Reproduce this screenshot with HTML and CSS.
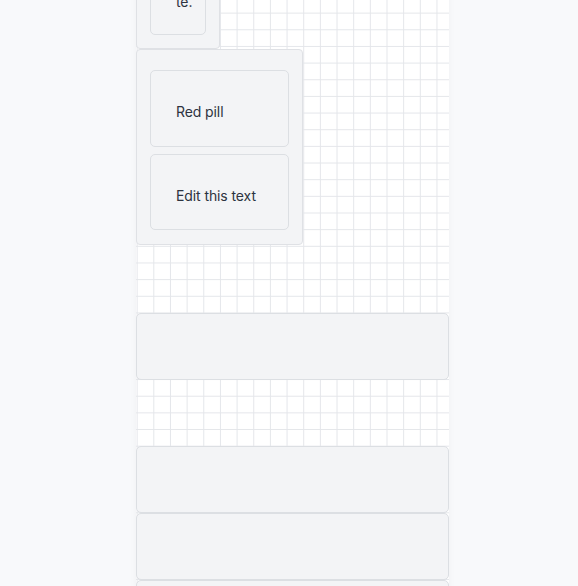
FILE: index.html
```html
<!DOCTYPE html>
<html>
<head>
<meta charset="utf-8">
<link rel="stylesheet" href="styles.css">
</head>
<body>
<div class="page">
  <div class="column">
    <div class="card card-small">
      <div class="item item-small"><span class="txt">te.</span></div>
    </div>
    <div class="card card-wide">
      <div class="item"><span class="txt">Red pill</span></div>
      <div class="item"><span class="txt">Edit this text</span></div>
    </div>
    <div class="spacer"></div>
    <div class="bar"></div>
    <div class="spacer spacer-2"></div>
    <div class="bar"></div>
    <div class="bar"></div>
    <div class="bar"></div>
  </div>
</div>
</body>
</html>
```

FILE: styles.css
```css
html, body {
  margin: 0;
  padding: 0;
  background: #f8f9fb;
  font-family: Inter, "Noto Sans", sans-serif;
  overflow: hidden;
  height: 586px;
}

.page {
  padding-left: 136px;
}

.column {
  width: 313px;
  margin-top: -46px;
  display: flex;
  flex-direction: column;
  background-color: #ffffff;
  background-image:
    linear-gradient(to right, #e4e6ea 1px, transparent 1px),
    linear-gradient(to bottom, #e4e6ea 1px, transparent 1px);
  background-size: 16.6667px 16.6667px;
  background-position: 0.67px 8.67px;
  box-shadow: 0 0 8px rgba(0, 0, 0, 0.035);
  min-height: 700px;
}

.card {
  box-sizing: border-box;
  background: #f3f4f6;
  border: 1px solid #dfe1e5;
  border-radius: 4px;
  padding: 14px 13px;
  display: flex;
  flex-direction: column;
  gap: 7px;
}

.card-small {
  width: 84px;
  height: 95px;
}

.card-wide {
  width: 167px;
  height: 196px;
  padding-top: 20px;
}

.item {
  box-sizing: border-box;
  height: 77px;
  background: #f3f4f6;
  border: 1px solid #dcdfe3;
  border-radius: 5px;
  display: flex;
  align-items: center;
  padding: 7px 0 0 25px;
}

.item-small {
  height: 66px;
  flex: 0 0 66px;
  overflow: hidden;
  align-items: flex-end;
  padding: 0 0 24px 25px;
}

.txt {
  font-size: 14px;
  color: #2d3340;
  white-space: nowrap;
  letter-spacing: -0.1px;
}

.spacer {
  height: 68px;
}

.spacer-2 {
  height: 66px;
}

.bar {
  box-sizing: border-box;
  height: 67px;
  background: #f3f4f6;
  border: 1px solid #dcdfe3;
  border-radius: 5px;
}
```
